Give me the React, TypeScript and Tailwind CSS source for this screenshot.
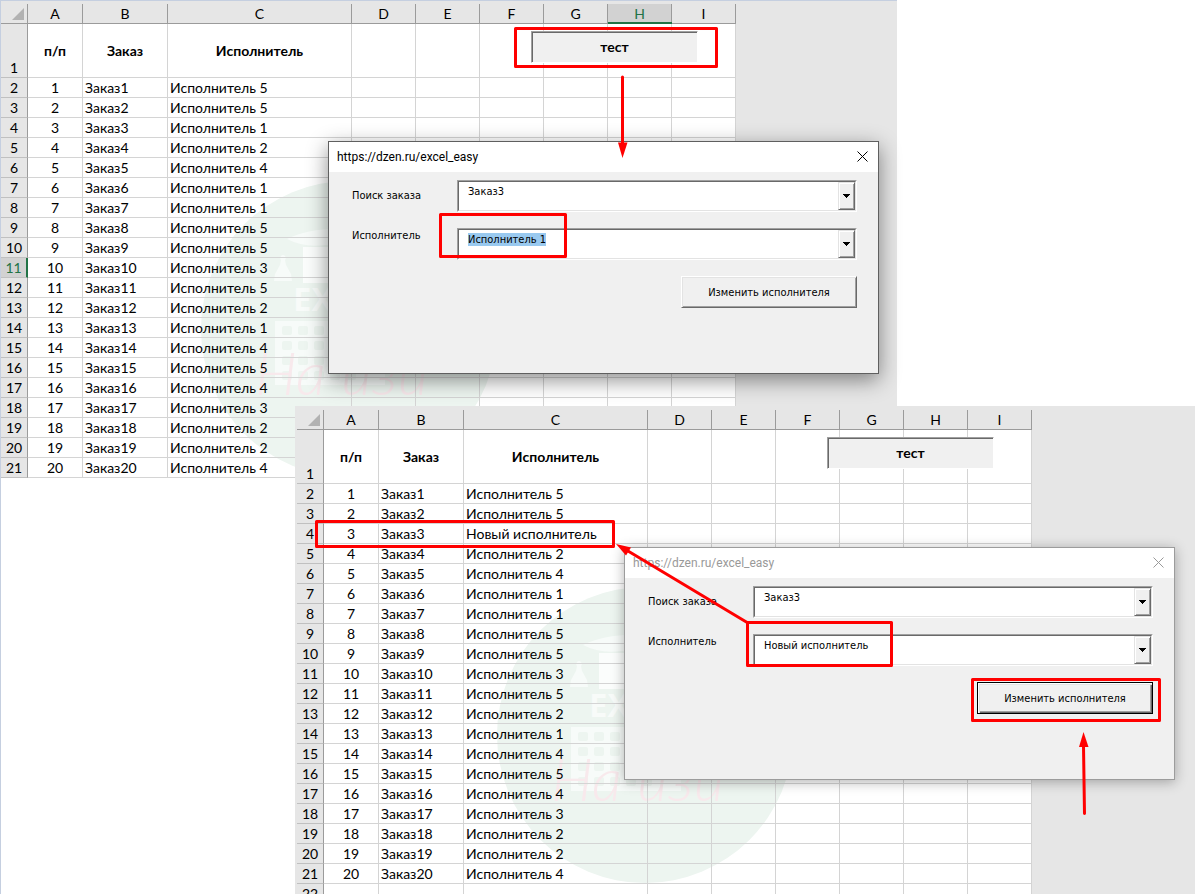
import React, { useEffect, useId, useRef } from 'react';
import clsx from 'clsx';

interface SheetProps {
  performers: string[];
  activeColumn?: string;
  activeRow?: number;
  extraRow?: boolean;
  className?: string;
  children?: React.ReactNode;
}

interface OrderFormProps {
  order: string;
  performer: string;
  inactive?: boolean;
}

const COLUMNS = [
  { name: 'A', width: 'w-[55px]' },
  { name: 'B', width: 'w-[85px]' },
  { name: 'C', width: 'w-[184px]' },
  { name: 'D', width: 'w-16' },
  { name: 'E', width: 'w-16' },
  { name: 'F', width: 'w-16' },
  { name: 'G', width: 'w-16' },
  { name: 'H', width: 'w-16' },
  { name: 'I', width: 'w-16' },
];

const EMPTY_COLUMNS = ['D', 'E', 'F', 'G', 'H', 'I'];

const PERFORMER_IDS = [5, 5, 1, 2, 4, 1, 1, 5, 5, 3, 5, 2, 1, 4, 5, 4, 3, 2, 2, 4];

const before = PERFORMER_IDS.map((id) => `Исполнитель ${id}`);
const after = before.map((name, i) => (i === 2 ? 'Новый исполнитель' : name));

const cell = 'border-r border-b border-[#d4d4d4] p-0';
const rowHead = 'border-r border-b border-r-[#9b9b9b] border-b-[#c0c0c0] bg-[#e6e6e6] p-0 text-center font-normal';

const Watermark: React.FC = () => (
  <svg className="absolute top-[178px] left-[198px] h-[300px] w-[300px]" viewBox="0 0 300 300" aria-hidden="true">
    <circle cx="150" cy="150" r="148" fill="#edf5f0" />
    <path d="M88 60c14-7 34-11 58-10l40 8v10l-60-2c-14 2-26 0-38-6z" fill="#f7fbf9" />
    <path d="M104 68h72v36h-72z" fill="#fbfdfc" />
    <path d="M84 76a3 3 0 0 1 2 5l1 5 5 9 1 7H75l1-7 5-9 1-5a3 3 0 0 1 2-5z" fill="#f7fbf9" />
    <text x="94" y="132" fontSize="33" fontWeight="700" fontFamily="Open Sans" fill="#f8fbf9">EXCEL</text>
    <path d="M76 142h110v64H76z" fill="#f7fbf9" />
    {[0, 1, 2, 3].map((r) =>
      [0, 1, 2, 3, 4].map((c) => (
        <rect key={`${r}-${c}`} x={83 + c * 16} y={147 + r * 15} width="10" height="9" rx="2" fill="#edf5f0" />
      ))
    )}
    <text x="56" y="216" fontSize="60" fontWeight="300" fontStyle="italic" fontFamily="Lato" fill="#f8e9ec">На изи</text>
  </svg>
);

const Sheet: React.FC<SheetProps> = ({ performers, activeColumn, activeRow, extraRow, className, children }) => (
  <section className={clsx('bg-[#e6e6e6]', className)}>
    <div className="relative">
      <div className="relative w-[735px] bg-white">
        <Watermark />
        <table className="relative w-full table-fixed border-separate border-spacing-0 font-['Lato','Noto_Sans',sans-serif] text-[14px] leading-[19px] text-black">
          <colgroup>
            <col className="w-[27px]" />
            {COLUMNS.map((c) => (
              <col key={c.name} className={c.width} />
            ))}
          </colgroup>
          <thead>
            <tr>
              <th className="h-[23px] border-b border-[#9b9b9b] bg-[#e6e6e6] p-0 pt-[3px]">
                <div className="flex h-[19px] items-center justify-end border-r border-[#9b9b9b] pr-[3px]">
                  <svg className="h-3 w-3" viewBox="0 0 12 12" aria-hidden="true">
                    <path d="M12 0v12H0z" fill="#b2b2b2" />
                  </svg>
                </div>
              </th>
              {COLUMNS.map((c) => (
                <th
                  key={c.name}
                  scope="col"
                  className={clsx(
                    'h-[23px] p-0 pt-[3px] text-center align-top font-normal',
                    c.name === activeColumn
                      ? 'border-b-2 border-[#217346] bg-[linear-gradient(#e6e6e6_3px,#d2d2d2_3px)] text-[#217346]'
                      : 'border-b border-[#9b9b9b] bg-[#e6e6e6]'
                  )}
                >
                  <div className={clsx('border-r border-[#9b9b9b]', c.name === activeColumn ? 'h-[18px]' : 'h-[19px]')}>
                    {c.name}
                  </div>
                </th>
              ))}
            </tr>
          </thead>
          <tbody>
            <tr>
              <th scope="row" className={clsx(rowHead, 'h-[54px] align-bottom')}>1</th>
              <td className={clsx(cell, 'text-center font-bold')}>п/п</td>
              <td className={clsx(cell, 'text-center font-bold')}>Заказ</td>
              <td className={clsx(cell, 'text-center font-bold')}>Исполнитель</td>
              {EMPTY_COLUMNS.map((c) => (
                <td key={c} className={cell} />
              ))}
            </tr>
            {performers.map((name, i) => (
              <tr key={i}>
                <th
                  scope="row"
                  className={clsx(
                    'h-5',
                    i + 2 === activeRow
                      ? 'border-r-2 border-b border-r-[#217346] border-b-[#c0c0c0] bg-[#d2d2d2] p-0 text-center font-normal text-[#217346]'
                      : rowHead
                  )}
                >
                  {i + 2}
                </th>
                <td className={clsx(cell, 'text-center')}>{i + 1}</td>
                <td className={clsx(cell, 'pl-0.5')}>Заказ{i + 1}</td>
                <td className={clsx(cell, 'pl-0.5 whitespace-nowrap')}>{name}</td>
                {EMPTY_COLUMNS.map((c) => (
                  <td key={c} className={cell} />
                ))}
              </tr>
            ))}
            {extraRow && (
              <tr>
                <th scope="row" className={clsx(rowHead, 'h-5')}>22</th>
                {COLUMNS.map((c) => (
                  <td key={c.name} className={cell} />
                ))}
              </tr>
            )}
          </tbody>
        </table>
        <button
          type="button"
          className="absolute top-[30px] left-[530px] h-8 w-[167px] border border-t-[#a0a0a0] border-r-white border-b-white border-l-[#a0a0a0] bg-[#f0f0f0] pb-0.5 font-['Lato','Noto_Sans',sans-serif] text-[14px] font-bold text-black shadow-[inset_1px_1px_0_#696969]"
        >
          тест
        </button>
      </div>
      {children}
    </div>
  </section>
);

const ArrowFace: React.FC = () => (
  <span className="flex h-full w-full items-center justify-center border border-t-[#e3e3e3] border-r-[#696969] border-b-[#696969] border-l-[#e3e3e3] bg-[#f0f0f0] shadow-[inset_1px_1px_0_#fff,inset_-1px_-1px_0_#a0a0a0]">
    <svg className="h-1 w-[7px]" viewBox="0 0 7 4" aria-hidden="true">
      <path d="M0 0h7v1H6v1H5v1H4v1H3V3H2V2H1V1H0z" fill="#000" />
    </svg>
  </span>
);

const field = 'block h-full w-full appearance-none rounded-none border-0 bg-transparent pt-0.5 pb-3 pl-[9px] pr-5 leading-[13px] text-black outline-none';

const Sunken: React.FC<{ children: React.ReactNode }> = ({ children }) => (
  <div className="h-8 flex-1 border border-t-[#a0a0a0] border-r-white border-b-white border-l-[#a0a0a0] bg-white">
    <div className="relative h-full border border-t-[#696969] border-r-[#e3e3e3] border-b-[#e3e3e3] border-l-[#696969]">
      {children}
    </div>
  </div>
);

const OrderForm: React.FC<OrderFormProps> = ({ order, performer, inactive }) => {
  const id = useId();
  const performerRef = useRef<HTMLInputElement>(null);

  useEffect(() => {
    if (!inactive) {
      performerRef.current?.focus();
      performerRef.current?.select();
    }
  }, [inactive]);

  return (
    <form
      onSubmit={(e) => e.preventDefault()}
      className={clsx(
        "absolute top-[140px] left-[327px] h-[233px] w-[551px] border bg-[#f0f0f0] font-['DejaVu_Sans_Condensed','DejaVu_Sans',sans-serif] text-[11px] text-black",
        inactive
          ? 'border-[#9c9c9c] shadow-[0_2px_12px_rgba(0,0,0,0.3)]'
          : 'border-[#5f5f5f] shadow-[0_6px_20px_rgba(0,0,0,0.45)]'
      )}
    >
      <div
        className={clsx(
          "flex h-[30px] items-center justify-between bg-white pr-[10px] pl-2 font-['Roboto','Noto_Sans',sans-serif] text-[12px]",
          inactive && 'text-[#999999]'
        )}
      >
        <span>https://dzen.ru/excel_easy</span>
        <button type="button" aria-label="Закрыть" className="pb-0.5">
          <svg className="h-[11px] w-[11px]" viewBox="0 0 11 11" fill="none" stroke="currentColor" aria-hidden="true">
            <path d="M.5.5l10 10M10.500.5l-10 10" />
          </svg>
        </button>
      </div>
      <div className="flex flex-col gap-4 pt-2 pr-[21px] pl-[23px]">
        <div className="flex">
          <label htmlFor={`${id}-order`} className="w-[105px] pt-[9px] leading-[13px]">Поиск заказа</label>
          <Sunken>
            <select id={`${id}-order`} defaultValue={order} className={field}>
              {before.map((_, i) => (
                <option key={i}>{`Заказ${i + 1}`}</option>
              ))}
            </select>
            <span className="pointer-events-none absolute inset-y-0 right-0 w-[17px]">
              <ArrowFace />
            </span>
          </Sunken>
        </div>
        <div className="flex">
          <label htmlFor={`${id}-performer`} className="w-[105px] pt-px leading-[13px]">Исполнитель</label>
          <Sunken>
            <input
              id={`${id}-performer`}
              ref={performerRef}
              type="text"
              defaultValue={performer}
              className={clsx(field, 'caret-transparent selection:bg-[#99c9ef] selection:text-black')}
            />
            <button type="button" aria-label="Список" className="absolute inset-y-0 right-0 w-[17px]">
              <ArrowFace />
            </button>
          </Sunken>
        </div>
      </div>
      <div className="mt-4 flex justify-end pr-[21px]">
        <button
          type="submit"
          className={clsx(
            'h-8 w-44 border bg-[#f0f0f0] pt-0.5',
            inactive
              ? 'border-black shadow-[inset_1px_1px_0_#fff,inset_2px_2px_0_#e3e3e3,inset_-1px_-1px_0_#696969,inset_-2px_-2px_0_#a0a0a0]'
              : 'border-t-white border-r-[#696969] border-b-[#696969] border-l-white shadow-[inset_1px_1px_0_#e3e3e3,inset_-1px_-1px_0_#a0a0a0]'
          )}
        >
          Изменить исполнителя
        </button>
      </div>
    </form>
  );
};

// Red frames and arrows drawn over both sheets
const Annotations: React.FC = () => (
  <svg
    className="pointer-events-none absolute top-0 -left-px h-[894px] w-[1195px]"
    viewBox="0 0 1195 894"
    fill="none"
    stroke="#ff0000"
    strokeWidth="3"
    strokeLinejoin="round"
    strokeLinecap="round"
    aria-hidden="true"
  >
    <rect x="515.5" y="28.5" width="201" height="38" />
    <rect x="440.5" y="214.500" width="125" height="42" />
    <rect x="316.5" y="521.5" width="297" height="25" />
    <rect x="747.5" y="622.5" width="144" height="43" />
    <rect x="972.5" y="679.5" width="187" height="41" />
    <path d="M622.5 77v68M748 623L628 551M1084.500 813.500L1083.5 746" />
    <g fill="#ff0000" stroke="none">
      <path d="M618 142.500h9.500L622.500 158z" />
      <path d="M616 544l15 3.500-5 8z" />
      <path d="M1083.5 732l5 15h-9.500z" />
    </g>
  </svg>
);

const App: React.FC = () => (
  <main className="relative flex h-screen flex-col overflow-hidden border-l border-[#c5cfe0] bg-white">
    <Sheet
      performers={before}
      activeColumn="H"
      activeRow={11}
      className="w-3/4 shrink-0 border-t border-[#c5cfe0]"
    >
      <OrderForm order="Заказ3" performer="Исполнитель 1" />
    </Sheet>
    <Sheet
      performers={after}
      extraRow
      className="relative -mt-[72px] ml-[294px] min-h-0 flex-1 overflow-hidden border-t border-l-2 border-[#e6e6e6]"
    >
      <OrderForm order="Заказ3" performer="Новый исполнитель" inactive />
    </Sheet>
    <Annotations />
  </main>
);

export default App;
